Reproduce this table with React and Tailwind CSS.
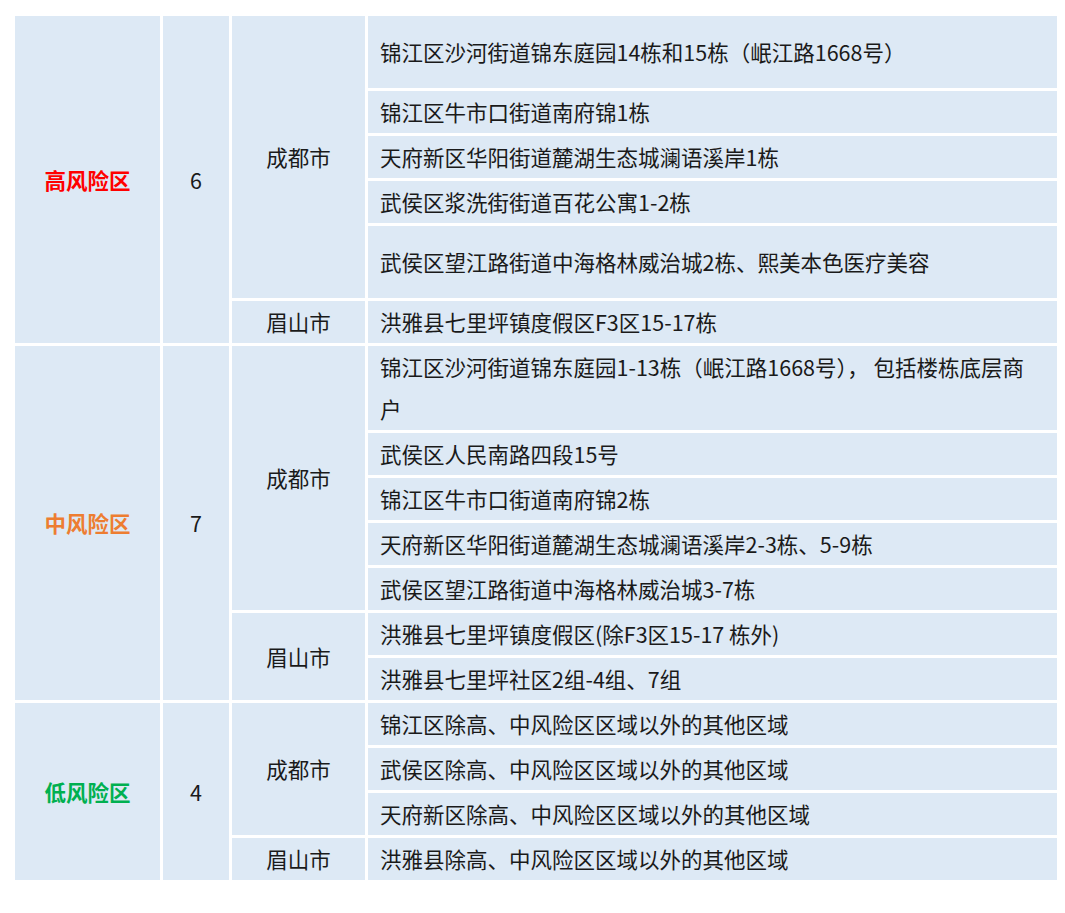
import React from "react";

const groups = [
  {
    label: "高风险区",
    color: "text-[#ff0000]",
    count: "6",
    cities: [
      {
        name: "成都市",
        rows: [
          { t: "锦江区沙河街道锦东庭园14栋和15栋（岷江路1668号）", h: "h-[72px]" },
          { t: "锦江区牛市口街道南府锦1栋" },
          { t: "天府新区华阳街道麓湖生态城澜语溪岸1栋" },
          { t: "武侯区浆洗街街道百花公寓1-2栋" },
          { t: "武侯区望江路街道中海格林威治城2栋、熙美本色医疗美容", h: "h-[72px]" },
        ],
      },
      { name: "眉山市", rows: [{ t: "洪雅县七里坪镇度假区F3区15-17栋" }] },
    ],
  },
  {
    label: "中风险区",
    color: "text-[#ed7d31]",
    count: "7",
    cities: [
      {
        name: "成都市",
        rows: [
          { t: "锦江区沙河街道锦东庭园1-13栋（岷江路1668号）， 包括楼栋底层商\n户" },
          { t: "武侯区人民南路四段15号" },
          { t: "锦江区牛市口街道南府锦2栋" },
          { t: "天府新区华阳街道麓湖生态城澜语溪岸2-3栋、5-9栋" },
          { t: "武侯区望江路街道中海格林威治城3-7栋" },
        ],
      },
      {
        name: "眉山市",
        rows: [
          { t: "洪雅县七里坪镇度假区(除F3区15-17 栋外)" },
          { t: "洪雅县七里坪社区2组-4组、7组" },
        ],
      },
    ],
  },
  {
    label: "低风险区",
    color: "text-[#00b050]",
    count: "4",
    cities: [
      {
        name: "成都市",
        rows: [
          { t: "锦江区除高、中风险区区域以外的其他区域" },
          { t: "武侯区除高、中风险区区域以外的其他区域" },
          { t: "天府新区除高、中风险区区域以外的其他区域" },
        ],
      },
      { name: "眉山市", rows: [{ t: "洪雅县除高、中风险区区域以外的其他区域" }] },
    ],
  },
];

const spanClass = {
  1: "row-span-1",
  2: "row-span-2",
  3: "row-span-3",
  4: "row-span-4",
  5: "row-span-5",
  6: "row-span-6",
  7: "row-span-7",
};

export default function App() {
  const cells = [];
  groups.forEach((g, gi) => {
    const total = g.cities.reduce((n, c) => n + c.rows.length, 0);
    g.cities.forEach((c, ci) => {
      c.rows.forEach((r, ri) => {
        if (ci === 0 && ri === 0) {
          cells.push(
            <div
              key={`g${gi}`}
              className={`${spanClass[total]} col-start-1 bg-[#dde9f5] flex items-center justify-center font-bold ${g.color}`}
            >
              {g.label}
            </div>
          );
          cells.push(
            <div
              key={`n${gi}`}
              className={`${spanClass[total]} col-start-2 bg-[#dde9f5] flex items-center justify-center`}
            >
              {g.count}
            </div>
          );
        }
        if (ri === 0) {
          cells.push(
            <div
              key={`c${gi}-${ci}`}
              className={`${spanClass[c.rows.length]} col-start-3 bg-[#dde9f5] flex items-center justify-center`}
            >
              {c.name}
            </div>
          );
        }
        cells.push(
          <div
            key={`r${gi}-${ci}-${ri}`}
            className={`col-start-4 bg-[#dde9f5] flex items-center pl-[12px] pr-[12px] ${r.h || "min-h-[42px]"}`}
          >
            <span className="whitespace-pre-line">{r.t}</span>
          </div>
        );
      });
    });
  });

  return (
    <div className="min-h-[913px] w-[1065px] bg-white pt-[16px] pl-[15px]">
      <div
        className="grid grid-cols-[145px_66px_133px_689px] gap-[3px] text-[21.5px] leading-[42px] text-[#1a1a1a]"
        style={{ fontFamily: '"Noto Sans CJK SC", "Noto Sans", sans-serif' }}
      >
        {cells}
      </div>
    </div>
  );
}
